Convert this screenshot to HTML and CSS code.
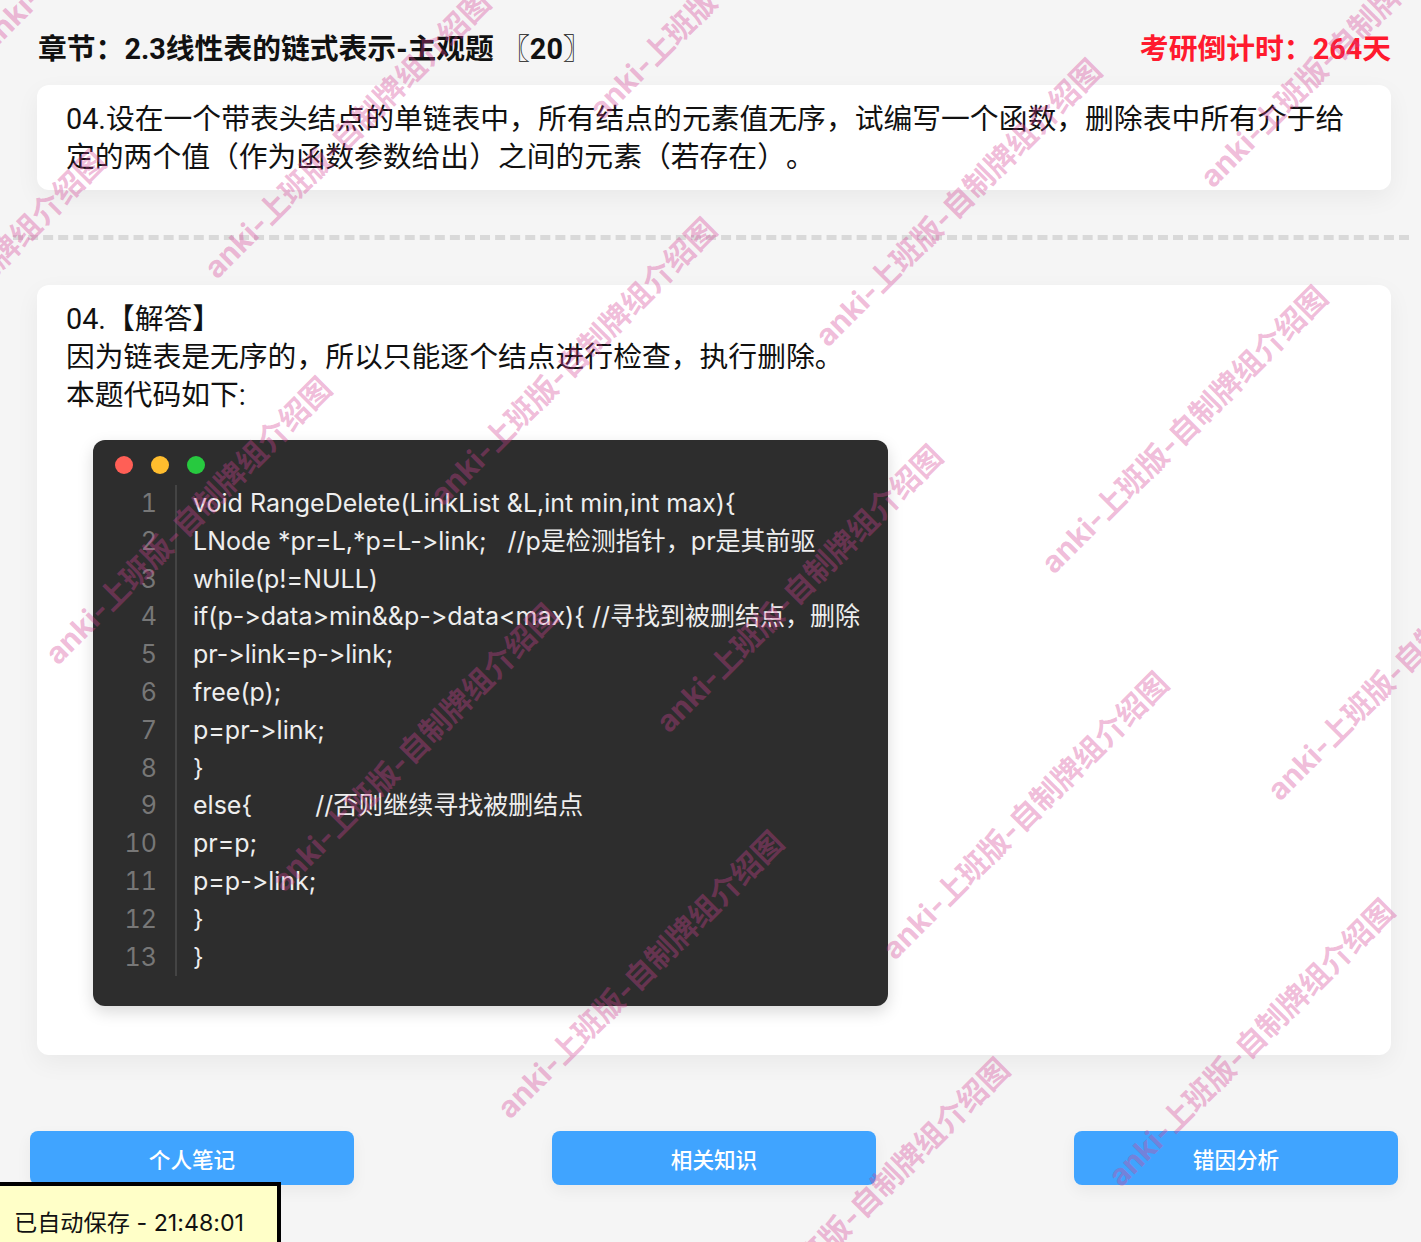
FILE: index.html
```html
<!DOCTYPE html>
<html lang="zh">
<head>
<meta charset="utf-8">
<title>章节</title>
<link rel="stylesheet" href="styles.css">
</head>
<body>
<main class="page">
  <header class="head">
    <div class="chapter">章节：2.3线性表的链式表示-主观题 〖20〗</div>
    <div class="countdown">考研倒计时：264天</div>
  </header>
  <section class="card question">04.设在一个带表头结点的单链表中，所有结点的元素值无序，试编写一个函数，删除表中所有介于给定的两个值（作为函数参数给出）之间的元素（若存在）。</section>
  <hr class="divider">
  <section class="card answer">
    <div>04.【解答】</div>
    <div>因为链表是无序的，所以只能逐个结点进行检查，执行删除。</div>
    <div>本题代码如下:</div>
    <div class="code">
      <div class="dots"><i class="dot red"></i><i class="dot yellow"></i><i class="dot green"></i></div>
      <div class="code-body">
        <div class="nums"><span>1</span><span>2</span><span>3</span><span>4</span><span>5</span><span>6</span><span>7</span><span>8</span><span>9</span><span>10</span><span>11</span><span>12</span><span>13</span></div>
        <pre class="src">void RangeDelete(LinkList &amp;L,int min,int max){
LNode *pr=L,*p=L-&gt;link;   //p是检测指针，pr是其前驱
while(p!=NULL)
if(p-&gt;data&gt;min&amp;&amp;p-&gt;data&lt;max){ //寻找到被删结点，删除
pr-&gt;link=p-&gt;link;
free(p);
p=pr-&gt;link;
}
else{         //否则继续寻找被删结点
pr=p;
p=p-&gt;link;
}
}</pre>
      </div>
    </div>
  </section>
  <nav class="actions">
    <button class="btn">个人笔记</button>
    <button class="btn">相关知识</button>
    <button class="btn">错因分析</button>
  </nav>
</main>
<div class="saved">已自动保存 - 21:48:01</div>
<svg class="marks" width="1421" height="1242" aria-hidden="true">
  <text transform="translate(-9 53) rotate(-45)">anki- 上班版-自制牌组介绍图</text>
  <text transform="translate(217 280) rotate(-45)">anki- 上班版-自制牌组介绍图</text>
  <text transform="translate(443 507) rotate(-45)">anki- 上班版-自制牌组介绍图</text>
  <text transform="translate(669 734) rotate(-45)">anki- 上班版-自制牌组介绍图</text>
  <text transform="translate(895 961) rotate(-45)">anki- 上班版-自制牌组介绍图</text>
  <text transform="translate(1121 1188) rotate(-45)">anki- 上班版-自制牌组介绍图</text>
  <text transform="translate(-168 439) rotate(-45)">anki- 上班版-自制牌组介绍图</text>
  <text transform="translate(58 666) rotate(-45)">anki- 上班版-自制牌组介绍图</text>
  <text transform="translate(284 893) rotate(-45)">anki- 上班版-自制牌组介绍图</text>
  <text transform="translate(510 1120) rotate(-45)">anki- 上班版-自制牌组介绍图</text>
  <text transform="translate(736 1347) rotate(-45)">anki- 上班版-自制牌组介绍图</text>
  <text transform="translate(602 121) rotate(-45)">anki- 上班版-自制牌组介绍图</text>
  <text transform="translate(828 348) rotate(-45)">anki- 上班版-自制牌组介绍图</text>
  <text transform="translate(1054 575) rotate(-45)">anki- 上班版-自制牌组介绍图</text>
  <text transform="translate(1280 802) rotate(-45)">anki- 上班版-自制牌组介绍图</text>
  <text transform="translate(1506 1029) rotate(-45)">anki- 上班版-自制牌组介绍图</text>
  <text transform="translate(1213 189) rotate(-45)">anki- 上班版-自制牌组介绍图</text>
  <text transform="translate(987 -38) rotate(-45)">anki- 上班版-自制牌组介绍图</text>
</svg>
</body>
</html>
```
FILE: styles.css
```css
* { box-sizing: border-box; }
html, body { margin: 0; height: 1242px; overflow: hidden; }
body {
  position: relative;
  background: #f5f5f5;
  font-family: "Roboto", "Noto Sans CJK SC", sans-serif;
  font-feature-settings: "calt" 0, "liga" 0;
  text-spacing-trim: space-all;
  color: #111;
}
.page { padding: 0 23px 0 30px; }
.head {
  display: flex;
  justify-content: space-between;
  align-items: center;
  height: 85px;
  padding: 8px 7px 0 8px;
  font-size: 28.8px;
  font-weight: 700;
}
.countdown { color: #ff1a2e; }
.card {
  background: #fff;
  margin: 0 7px;
  border-radius: 12px;
  box-shadow: 0 8px 24px rgba(0, 0, 0, 0.05);
  font-size: 28.8px;
  line-height: 38px;
  padding: 15px 29px 0;
}
.question { height: 105px; }
.divider {
  border: 0;
  border-top: 5px dashed #d9d9d9;
  margin: 45px -11px 45px -17px;
}
.answer { height: 770px; }
.code {
  width: 795px;
  height: 566px;
  margin: 26px 0 0 27px;
  background: #2d2d2d;
  border-radius: 12px;
  box-shadow: 0 6px 16px rgba(0, 0, 0, 0.15);
  padding: 16px 22px;
  color: #eee;
  font-family: "Inter", "Noto Sans CJK SC", sans-serif;
  font-size: 25px;
  line-height: 37.8px;
}
.dots { display: flex; gap: 18px; height: 18px; }
.dot { width: 18px; height: 18px; border-radius: 50%; }
.red { background: #ff5f56; }
.yellow { background: #ffbd2e; }
.green { background: #27c93f; }
.code-body { display: flex; margin-top: 11px; }
.nums {
  display: flex;
  flex-direction: column;
  align-items: flex-end;
  width: 62px;
  padding-right: 18px;
  border-right: 2px solid #444;
  color: #777;
  font-variant-numeric: tabular-nums;
}
.src {
  margin: 0 0 0 16px;
  font: inherit;
  white-space: pre;
}
.actions {
  display: flex;
  justify-content: space-between;
  margin-top: 76px;
}
.btn {
  width: 324px;
  height: 54px;
  border: 0;
  border-radius: 8px;
  background: #40a4ff;
  color: #fff;
  font: 500 21.6px "Roboto", "Noto Sans CJK SC", sans-serif;
  box-shadow: 0 6px 16px rgba(0, 0, 0, 0.05);
}
.saved {
  position: absolute;
  left: -4px;
  top: 1182px;
  width: 285px;
  height: 70px;
  padding: 14px 0 0 14px;
  background: #ffffc8;
  border: 4px solid #000;
  font-family: "Inter", "Noto Sans CJK SC", sans-serif;
  font-size: 23.2px;
  line-height: 46px;
}
.marks {
  position: absolute;
  left: 0;
  top: 0;
  pointer-events: none;
}
.marks text {
  font-family: "Inter", "Noto Sans CJK SC", sans-serif;
  font-size: 30px;
  font-weight: 700;
  word-spacing: -7px;
  fill: rgba(213, 66, 149, 0.36);
}
```
